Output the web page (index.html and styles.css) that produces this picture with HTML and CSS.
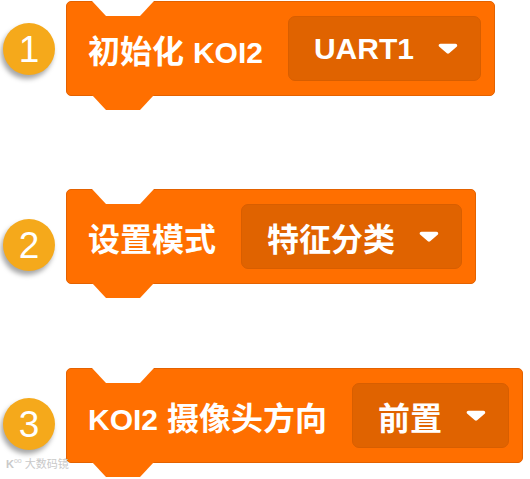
FILE: index.html
```html
<!DOCTYPE html>
<html lang="zh-CN">
<head>
  <meta charset="UTF-8">
  <title>KOI2 积木</title>
  <link rel="stylesheet" href="styles.css">
</head>
<body>
<main class="steps">
  <div class="step step-first">
    <div class="num">1</div>
    <div class="block">
      <span class="label">初始化 <span class="latin">KOI2</span></span>
      <div class="dropdown">
        <span class="latin">UART1</span>
        <svg class="arrow" width="20" height="11" viewBox="0 0 20 11"><polygon points="2.5,2.5 17.5,2.5 10,9" fill="#fff" stroke="#fff" stroke-width="3.5" stroke-linejoin="round"/></svg>
      </div>
    </div>
  </div>

  <div class="step">
    <div class="num">2</div>
    <div class="block">
      <span class="label">设置模式</span>
      <div class="dropdown">
        <span>特征分类</span>
        <svg class="arrow" width="20" height="11" viewBox="0 0 20 11"><polygon points="2.5,2.5 17.5,2.5 10,9" fill="#fff" stroke="#fff" stroke-width="3.5" stroke-linejoin="round"/></svg>
      </div>
    </div>
  </div>

  <div class="step">
    <div class="num">3</div>
    <div class="block">
      <span class="label"><span class="latin">KOI2</span> 摄像头方向</span>
      <div class="dropdown">
        <span>前置</span>
        <svg class="arrow" width="20" height="11" viewBox="0 0 20 11"><polygon points="2.5,2.5 17.5,2.5 10,9" fill="#fff" stroke="#fff" stroke-width="3.5" stroke-linejoin="round"/></svg>
      </div>
    </div>
  </div>

  <div class="watermark"><b>K</b><sup>oo</sup> 大数码镜</div>
</main>
</body>
</html>
```

FILE: styles.css
```css
body {
  margin: 0;
  background: #fff;
  font-family: "Liberation Sans", "Noto Sans CJK SC", sans-serif;
}
.steps {
  position: relative;
  height: 479px;
  padding-top: 1px;
  box-sizing: border-box;
  display: flex;
  flex-direction: column;
  gap: 84px;
}
.step {
  display: flex;
  align-items: flex-start;
  padding-left: 3px;
  gap: 11px;
}
.step-first {
  margin-bottom: 9px;
}
.num {
  width: 52px;
  height: 52px;
  margin-top: 30px;
  border-radius: 50%;
  background: #f5a91b;
  box-shadow: -2px 4px 5px rgba(0, 0, 0, 0.35);
  color: #fff;
  font-size: 37px;
  line-height: 54px;
  text-align: center;
}
.step-first .num {
  margin-top: 22px;
}
.block {
  position: relative;
  display: flex;
  align-items: center;
  gap: 25px;
  height: 95px;
  box-sizing: border-box;
  padding: 0 13px 0 21px;
  background: #ff6f00;
  border: 1px solid #e46200;
  border-radius: 5px;
  color: #fff;
  font-size: 32px;
  font-weight: bold;
  white-space: nowrap;
}
.latin {
  font-size: 30px;
}
/* top notch */
.block::before {
  content: "";
  position: absolute;
  top: -1px;
  left: 25px;
  width: 62px;
  height: 15px;
  background: #fff;
  clip-path: polygon(0 0, 100% 0, 48px 100%, 14px 100%);
}
/* bottom tab */
.block::after {
  content: "";
  position: absolute;
  bottom: -15px;
  left: 25px;
  width: 62px;
  height: 15px;
  background: #ff6f00;
  clip-path: polygon(0 0, 100% 0, 48px 100%, 14px 100%);
}
.dropdown {
  display: flex;
  align-items: center;
  gap: 24px;
  height: 65px;
  padding: 0 22px 0 25px;
  background: #e06300;
  border: 1px solid #d85e00;
  border-radius: 7px;
  box-sizing: border-box;
}
.arrow {
  display: block;
}
.watermark {
  position: absolute;
  left: 6px;
  top: 455px;
  font-size: 11px;
  color: #c9c9c9;
}
.watermark sup {
  font-size: 7px;
}
```
